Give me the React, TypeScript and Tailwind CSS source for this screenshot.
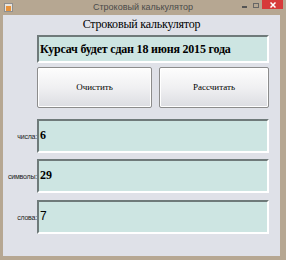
import React from 'react';

const serif = { fontFamily: '"Liberation Serif", "Times New Roman", serif' };
const sans = { fontFamily: '"Liberation Sans", Arial, sans-serif' };

const Field: React.FC<{ className?: string; children?: React.ReactNode }> = ({ className, children }) => (
  <div
    className={`bg-[#cde5e2] border-t-2 border-l-2 border-t-[#6f7a7a] border-l-[#6f7a7a] border-b-2 border-r-2 border-b-white border-r-white flex items-center ${className ?? ''}`}
  >
    {children}
  </div>
);

const Btn: React.FC<{ label: string; className?: string }> = ({ label, className }) => (
  <button
    className={`h-[41px] rounded-[2px] border border-[#8c8c8c] bg-gradient-to-b from-[#fdfdfd] via-[#f0f0f2] to-[#dcdde2] shadow-[inset_0_0_0_1px_#ffffff] text-[9px] text-black ${className ?? ''}`}
    style={serif}
  >
    {label}
  </button>
);

const StatRow: React.FC<{ label: string; value: string; plain?: boolean; className?: string }> = ({ label, value, plain, className }) => (
  <div className={`flex items-center ${className ?? ''}`}>
    <span className="w-[34px] text-right text-[7px] text-[#222] mt-[2px] tracking-[-0.2px] whitespace-nowrap" style={sans}>
      {label}
    </span>
    <Field className="flex-1 h-[34px] pl-[1px]">
      <span
        className={plain ? 'text-[12px] -mt-[3px]' : 'text-[12px] font-bold -mt-[2px]'}
        style={plain ? sans : serif}
      >
        {value}
      </span>
    </Field>
  </div>
);

export default function App() {
  return (
    <div className="w-[286px] h-[260px] bg-[#b6a792] flex flex-col overflow-hidden">
      <div className="h-[15px] flex items-start relative">
        <div className="ml-[4px] mt-[3px] w-[9px] h-[9px] bg-[#e8e4dc] border border-[#8f8f8f] flex items-end justify-center">
          <div className="w-[5px] h-[5px] bg-[#e8923a]" />
        </div>
        <div className="absolute left-0 right-0 top-[1px] text-center text-[9px] text-[#4a4a4a]" style={sans}>
          Строковый калькулятор
        </div>
        <div className="ml-auto flex items-start relative">
          <div className="w-[5px] h-[2px] bg-[#555] mt-[6px] mr-[6px]" />
          <div className="w-[6px] h-[5px] border border-[#666] mt-[3px] mr-[3px]" />
          <div className="w-[21px] h-[9px] bg-[#d73a3a] flex items-center justify-center mr-[3px]">
            <svg width="6" height="6" viewBox="0 0 6 6">
              <path d="M0.5 0.5 L5.5 5.5 M5.5 0.5 L0.5 5.5" stroke="white" strokeWidth="1.5" />
            </svg>
          </div>
        </div>
      </div>
      <div className="ml-[3px] mr-[6px] h-[241px] bg-[#dfe1e8] flex flex-col pr-[11px]">
        <div className="h-[20px] text-center text-[12px] leading-[14px] pl-[11px] pt-[2px] tracking-[-0.2px]" style={serif}>
          Строковый калькулятор
        </div>
        <div className="pl-[34px]">
          <Field className="h-[28px] pl-[1px]">
            <span className="text-[12px] font-bold whitespace-nowrap tracking-[-0.2px]" style={serif}>
              Курсач будет сдан 18 июня 2015 года
            </span>
          </Field>
          <div className="flex mt-[4px]">
            <Btn label="Очистить" className="w-[115px]" />
            <Btn label="Рассчитать" className="w-[110px] ml-[7px]" />
          </div>
        </div>
        <StatRow label="числа:" value="6" className="mt-[11px]" />
        <StatRow label="символы:" value="29" className="mt-[6px]" />
        <StatRow label="слова:" value="7" plain className="mt-[7px]" />
      </div>
    </div>
  );
}
